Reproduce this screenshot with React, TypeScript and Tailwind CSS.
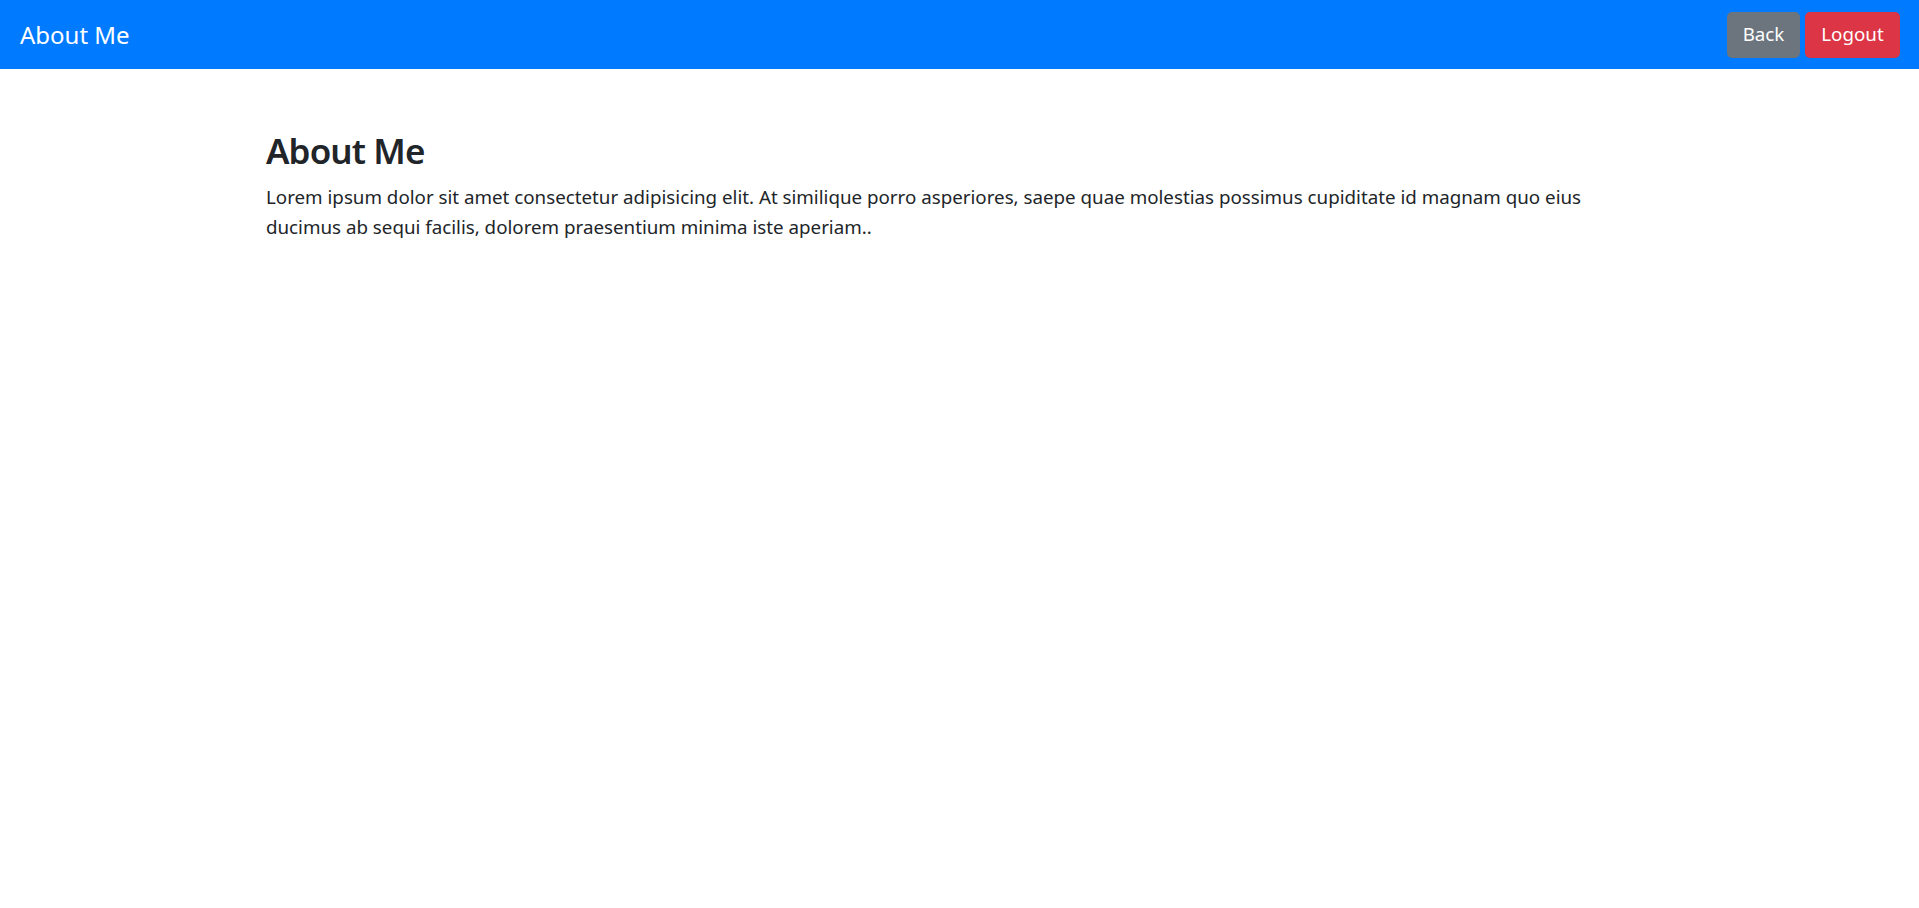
export default function App() {
  return (
    <div className="min-h-[908px] bg-white font-['Noto_Sans',sans-serif] text-[#212529]">
      <nav className="flex h-[69px] items-center justify-between bg-[#007bff] pl-[20px] pr-[19px]">
        <span className="text-[24px] leading-[36px] text-white">About Me</span>
        <div className="flex gap-[5px]">
          <button className="h-[46px] w-[73px] rounded-[5px] bg-[#6c757d] text-[18.75px] text-white">Back</button>
          <button className="h-[46px] w-[95px] rounded-[5px] bg-[#dc3545] text-[18.75px] text-white">Logout</button>
        </div>
      </nav>
      <main className="mx-auto mt-[61px] w-[1425px] pl-[19px] pr-[18px]">
        <h2 className="mb-[10px] text-[35px] font-semibold leading-[42px] tracking-[-0.9px]">About Me</h2>
        <p className="text-[18.75px] leading-[29.5px]">
          Lorem ipsum dolor sit amet consectetur adipisicing elit. At similique porro asperiores, saepe quae molestias possimus cupiditate id magnam quo eius ducimus ab sequi facilis, dolorem praesentium minima iste aperiam..
        </p>
      </main>
    </div>
  );
}
